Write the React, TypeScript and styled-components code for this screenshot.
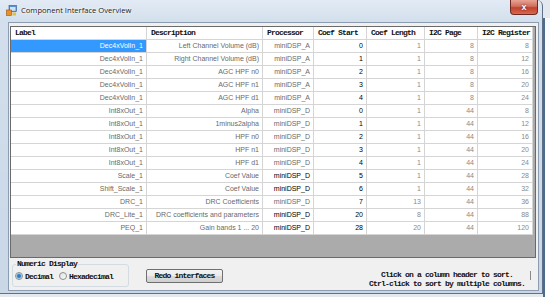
import React from 'react';
import styled, { createGlobalStyle } from 'styled-components';

const Global = createGlobalStyle`
  html, body { margin: 0; padding: 0; background: #e4e9ef; }
  body { width: 550px; height: 297px; overflow: hidden; }
  * { box-sizing: border-box; }
`;

const MONO = `"Liberation Mono", "DejaVu Sans Mono", monospace`;
const SANS = `"Liberation Sans", Arial, sans-serif`;

const Screen = styled.div`
  width: 550px;
  height: 297px;
  display: flex;
  overflow: hidden;
  background: #e4e9ef;
`;

const Window = styled.div`
  width: 543px;
  height: 294px;
  flex: none;
  display: flex;
  flex-direction: column;
  background: linear-gradient(180deg, #e2ebf5 0, #d3dfec 22px, #c9d7e7 100%);
  border-right: 1px solid #5e7189;
  border-bottom: 1px solid #5e7189;
  border-top-right-radius: 6px;
  padding: 0 3px 2px 8px;
`;

const TitleBar = styled.div`
  height: 22px;
  display: flex;
  align-items: flex-start;
  margin-left: -2px;
`;

const AppIcon = styled.svg`
  width: 11px;
  height: 11px;
  margin: 5px 4px 0 0;
  flex: none;
`;

const Title = styled.div`
  font-family: "Open Sans", "Liberation Sans", sans-serif;
  font-size: 7.6px;
  line-height: 10px;
  margin-top: 5px;
  color: #1a1a1a;
  text-shadow: 0 0 4px #ffffff, 0 0 2px #ffffff;
`;

const CloseButton = styled.div`
  margin-left: auto;
  margin-right: 1px;
  width: 28px;
  height: 15px;
  border: 1px solid #6d2a22;
  border-top: none;
  border-radius: 0 0 4px 4px;
  background: linear-gradient(180deg, #e8a394 0, #d0705d 45%, #c2402c 55%, #d66a4f 100%);
  display: flex;
  align-items: center;
  justify-content: center;
  color: #fff;
  font-family: ${SANS};
  font-weight: bold;
  font-size: 9px;
  text-shadow: 0 0 2px #5a1a10;
`;

const Client = styled.div`
  height: 269px;
  display: flex;
  flex-direction: column;
  background: #f0f0f0;
  border: 1px solid #8c9db1;
  padding: 3px 2px 0 1px;
`;

const Grid = styled.div<{ $cols: string }>`
  height: 232px;
  flex: none;
  border: 1px solid #6a6a6a;
  background: #ababab;
  display: grid;
  grid-template-columns: ${(p) => p.$cols};
  grid-auto-rows: 13px;
  align-content: start;
`;

const HeadCell = styled.div`
  background: #ffffff;
  border-right: 1px solid #d5d5d5;
  border-bottom: 1px solid #d5d5d5;
  font-family: ${MONO};
  font-size: 8px;
  letter-spacing: -0.8px;
  font-weight: bold;
  color: #111;
  line-height: 12px;
  padding-left: 4px;
  white-space: nowrap;
  overflow: hidden;
`;

const Cell = styled.div<{ $tone: 'gray' | 'dark' | 'light'; $selected?: boolean }>`
  background: ${(p) => (p.$selected ? '#3399ff' : '#ffffff')};
  border-right: 1px solid #d5d5d5;
  border-bottom: 1px solid #d5d5d5;
  font-family: ${SANS};
  font-size: 7px;
  line-height: 12px;
  text-align: right;
  padding-right: 3px;
  white-space: nowrap;
  overflow: hidden;
  color: ${(p) =>
    p.$selected ? '#ffffff' : p.$tone === 'dark' ? '#000000' : p.$tone === 'light' ? '#8a8a8a' : '#6a6a6a'};
`;

const Bottom = styled.div`
  flex: 1;
  display: flex;
  align-items: flex-start;
`;

const Group = styled.fieldset`
  margin: 2px 0 0 2px;
  width: 117px;
  height: 27px;
  border: 1px solid #d3dce3;
  border-radius: 3px;
  padding: 0 0 0 2px;
  display: flex;
  align-items: center;
  gap: 6px;
`;

const Legend = styled.legend`
  font-family: ${MONO};
  font-size: 8px;
  letter-spacing: -0.8px;
  font-weight: bold;
  color: #111;
  padding: 0 1px;
  margin-left: 1px;
  line-height: 8px;
`;

const RadioItem = styled.label`
  display: flex;
  align-items: center;
  gap: 2px;
  font-family: ${MONO};
  font-size: 8px;
  letter-spacing: -0.8px;
  font-weight: bold;
  color: #111;
  margin-top: -2px;
`;

const RadioDot = styled.span<{ $on?: boolean }>`
  width: 8px;
  height: 8px;
  border-radius: 50%;
  border: 1px solid #8e8f8f;
  background: ${(p) =>
    p.$on
      ? 'radial-gradient(circle, #1f6fb8 0, #3c8ad0 1.6px, #a8cbe8 2.6px, #eef3f7 3.2px)'
      : 'linear-gradient(135deg, #e0e0e0, #fbfbfb)'};
  flex: none;
`;

const Button = styled.button`
  margin: 11px 0 0 17px;
  width: 77px;
  height: 14px;
  padding: 0;
  border: 1px solid #707070;
  border-radius: 2px;
  background: linear-gradient(180deg, #f3f3f3 0, #ebebeb 50%, #dddddd 51%, #cfcfcf 100%);
  font-family: ${MONO};
  font-size: 8px;
  letter-spacing: -0.8px;
  font-weight: bold;
  color: #111;
  line-height: 12px;
`;

const Hint = styled.div`
  margin: 12px 0 0 auto;
  text-align: center;
  font-family: ${MONO};
  font-size: 8px;
  letter-spacing: -0.8px;
  font-weight: bold;
  color: #111;
  line-height: 9px;
`;

const Grip = styled.div`
  width: 1px;
  height: 9px;
  margin: 13px 5px 0 5px;
  background: #8a8a8a;
`;

const Behind = styled.div`
  flex: 1;
  margin-top: 18px;
  border-left: 2px solid #4f6b8c;
  background: linear-gradient(180deg, #f7f9fb 0, #ffffff 40px, #ffffff 100%);
`;

type Row = [string, string, string, string, string, string, string, boolean];

const rows: Row[] = [
  ['Dec4xVolIn_1', 'Left Channel Volume (dB)', 'miniDSP_A', '0', '1', '8', '8', false],
  ['Dec4xVolIn_1', 'Right Channel Volume (dB)', 'miniDSP_A', '1', '1', '8', '12', false],
  ['Dec4xVolIn_1', 'AGC HPF n0', 'miniDSP_A', '2', '1', '8', '16', false],
  ['Dec4xVolIn_1', 'AGC HPF n1', 'miniDSP_A', '3', '1', '8', '20', false],
  ['Dec4xVolIn_1', 'AGC HPF d1', 'miniDSP_A', '4', '1', '8', '24', false],
  ['Int8xOut_1', 'Alpha', 'miniDSP_D', '0', '1', '44', '8', false],
  ['Int8xOut_1', '1minus2alpha', 'miniDSP_D', '1', '1', '44', '12', false],
  ['Int8xOut_1', 'HPF n0', 'miniDSP_D', '2', '1', '44', '16', false],
  ['Int8xOut_1', 'HPF n1', 'miniDSP_D', '3', '1', '44', '20', false],
  ['Int8xOut_1', 'HPF d1', 'miniDSP_D', '4', '1', '44', '24', false],
  ['Scale_1', 'Coef Value', 'miniDSP_D', '5', '1', '44', '28', true],
  ['Shift_Scale_1', 'Coef Value', 'miniDSP_D', '6', '1', '44', '32', true],
  ['DRC_1', 'DRC Coefficients', 'miniDSP_D', '7', '13', '44', '36', false],
  ['DRC_Lite_1', 'DRC coefficients and parameters', 'miniDSP_D', '20', '8', '44', '88', true],
  ['PEQ_1', 'Gain bands 1 ... 20', 'miniDSP_D', '28', '20', '44', '120', true],
];

const headers = ['Label', 'Description', 'Processor', 'Coef Start', 'Coef Length', 'I2C Page', 'I2C Register'];
const widths = [136, 116, 51, 53, 58, 53, 55];

export default function App() {
  return (
    <>
      <Global />
      <Screen>
        <Window>
          <TitleBar>
            <AppIcon viewBox="0 0 11 11">
              <rect x="3" y="0.5" width="7.5" height="6" fill="#5b8fd0" stroke="#2d5a96" strokeWidth="0.6" />
              <rect x="4" y="2" width="5.5" height="3.8" fill="#cfe2f7" />
              <rect x="0.5" y="5" width="5" height="5.5" fill="#e8902c" stroke="#9a5310" strokeWidth="0.6" />
              <rect x="6.5" y="7.5" width="3.5" height="3" fill="#e0c040" />
            </AppIcon>
            <Title>Component Interface Overview</Title>
            <CloseButton>x</CloseButton>
          </TitleBar>
          <Client>
            <Grid $cols={widths.map((w) => `${w}px`).join(' ')}>
              {headers.map((h) => (
                <HeadCell key={h}>{h}</HeadCell>
              ))}
              {rows.map((r, i) => (
                <React.Fragment key={i}>
                  <Cell $tone="gray" $selected={i === 0}>{r[0]}</Cell>
                  <Cell $tone="gray">{r[1]}</Cell>
                  <Cell $tone={r[7] ? 'dark' : 'gray'}>{r[2]}</Cell>
                  <Cell $tone="dark">{r[3]}</Cell>
                  <Cell $tone="light">{r[4]}</Cell>
                  <Cell $tone="light">{r[5]}</Cell>
                  <Cell $tone="light">{r[6]}</Cell>
                </React.Fragment>
              ))}
            </Grid>
            <Bottom>
              <Group>
                <Legend>Numeric Display</Legend>
                <RadioItem>
                  <RadioDot $on />
                  Decimal
                </RadioItem>
                <RadioItem>
                  <RadioDot />
                  Hexadecimal
                </RadioItem>
              </Group>
              <Button>Redo interfaces</Button>
              <Hint>
                Click on a column header to sort.
                <br />
                Ctrl-click to sort by multiple columns.
              </Hint>
              <Grip />
            </Bottom>
          </Client>
        </Window>
        <Behind />
      </Screen>
    </>
  );
}
